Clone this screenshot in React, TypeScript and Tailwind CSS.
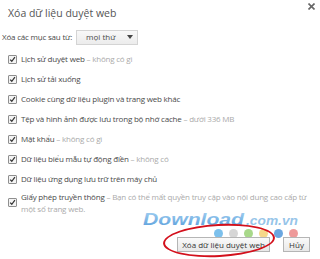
import { useState } from 'react';

const rows = [
    { label: 'Lịch sử duyệt web', note: 'không có gì' },
    { label: 'Lịch sử tải xuống', note: '' },
    { label: 'Cookie cùng dữ liệu plugin và trang web khác', note: '' },
    { label: 'Tệp và hình ảnh được lưu trong bộ nhớ cache', note: 'dưới 336 MB' },
    { label: 'Mật khẩu', note: 'không có gì' },
    { label: 'Dữ liệu biểu mẫu tự động điền', note: 'không có' },
    { label: 'Dữ liệu ứng dụng lưu trữ trên máy chủ', note: '' },
];

const CheckBox = ({ checked, onClick }: { checked: boolean; onClick: () => void }) => (
    <button
        type="button"
        onClick={onClick}
        className="w-[9px] h-[9px] shrink-0 border border-[#8f8f8f] bg-[#f4f4f4] rounded-[1px] flex items-center justify-center"
    >
        {checked && (
            <svg width="9" height="9" viewBox="0 0 9 9">
                <path d="M1.5 4.6 L3.6 6.8 L7.6 1.6" fill="none" stroke="#333" strokeWidth="1.6" />
            </svg>
        )}
    </button>
);

// Download.com.vn watermark (logo)
const Watermark = () => (
    <svg width="160" height="22" viewBox="0 0 160 22" className="absolute left-[142px] top-[208px]">
        <defs>
            <linearGradient id="wm" x1="0" y1="0" x2="0" y2="1">
                <stop offset="0" stopColor="#8cc4ee" />
                <stop offset="1" stopColor="#2f86d2" />
            </linearGradient>
        </defs>
        <text x="1" y="17" fontFamily="Liberation Sans, sans-serif" fontStyle="italic" fontWeight="bold" fontSize="16" fill="url(#wm)" fillOpacity="0.8" textLength="101" lengthAdjust="spacingAndGlyphs">
            Download
        </text>
        <text x="104" y="17" fontFamily="Liberation Sans, sans-serif" fontStyle="italic" fontWeight="bold" fontSize="12" fill="#5aa3dc" fillOpacity="0.65" textLength="52" lengthAdjust="spacingAndGlyphs">
            .com.vn
        </text>
    </svg>
);

const App = () => {
    const [checked, setChecked] = useState<boolean[]>(Array(8).fill(true));

    const toggle = (i: number) => {
        const next = [...checked];
        next[i] = !next[i];
        setChecked(next);
    };

    return (
        <div className="relative w-[320px] h-[259px] bg-white overflow-hidden text-[#4a4a4a] font-['Open_Sans',sans-serif]">
            {/* header */}
            <div className="flex justify-between items-start h-[26px]">
                <h1 className="pl-[8px] pt-[5px] text-[10.5px] leading-[16px] text-[#555]">Xóa dữ liệu duyệt web</h1>
                <svg width="7" height="7" viewBox="0 0 7 7" className="mt-[3px] mr-[5px]">
                    <path d="M0.5 0.5 L6.5 6.5 M6.5 0.5 L0.5 6.5" stroke="#666" strokeWidth="1.6" />
                </svg>
            </div>

            <div className="flex items-center h-[22px] pl-[2px] gap-[4px]">
                <span className="text-[8px] tracking-[-0.2px]">Xóa các mục sau từ:</span>
                <div className="w-[62px] h-[15px] border border-[#d4d4d4] bg-gradient-to-b from-[#f8f8f8] to-[#ececec] flex items-center justify-between pl-[9px] pr-[4px]">
                    <span className="text-[8px] leading-none">mọi thứ</span>
                    <svg width="6" height="4" viewBox="0 0 6 4">
                        <path d="M0 0 L6 0 L3 4 Z" fill="#444" />
                    </svg>
                </div>
            </div>

            <div className="flex flex-col pl-[8px] mt-[1px]">
                {rows.map((r, i) => (
                    <div key={r.label} className="flex items-center h-[20px] gap-[4px]">
                        <CheckBox checked={checked[i]} onClick={() => toggle(i)} />
                        <span className="text-[8px] tracking-[-0.2px] whitespace-nowrap">
                            {r.label}
                            {r.note && <span className="text-[#aaa]">{'  –  '}{r.note}</span>}
                        </span>
                    </div>
                ))}
                <div className="flex items-center gap-[4px] h-[24px] pt-[3px]">
                    <CheckBox checked={checked[7]} onClick={() => toggle(7)} />
                    <div className="text-[8px] tracking-[-0.2px] leading-[12px]">
                        Giấy phép truyền thông
                        <span className="text-[#aaa]"> – Bạn có thể mất quyền truy cập vào nội dung cao cấp từ một số trang web.</span>
                    </div>
                </div>
            </div>

            <Watermark />
            <div className="absolute left-[214px] top-[229px] flex gap-[6px]">
                <span className="w-[9px] h-[9px] rounded-full bg-[#7cc0ec]" />
                <span className="w-[9px] h-[9px] rounded-full bg-[#d6d6d6]" />
                <span className="w-[9px] h-[9px] rounded-full bg-[#a8d88a]" />
                <span className="w-[9px] h-[9px] rounded-full bg-[#f6d88a]" />
                <span className="w-[9px] h-[9px] rounded-full bg-[#6aa6e0]" />
                <span className="w-[9px] h-[9px] rounded-full bg-[#ee9a9a]" />
            </div>

            {/* buttons */}
            <div className="absolute left-[177px] top-[237px] flex gap-[13px]">
                <button className="w-[93px] h-[15px] border border-[#b5b5b5] bg-gradient-to-b from-[#fafafa] to-[#e8e8e8] text-[8px] leading-none text-[#333]">
                    Xóa dữ liệu duyệt web
                </button>
                <button className="w-[27px] h-[15px] border border-[#b5b5b5] bg-gradient-to-b from-[#fafafa] to-[#e8e8e8] text-[8px] leading-none text-[#333]">
                    Hủy
                </button>
            </div>

            {/* red highlight */}
            <div className="absolute left-[163px] top-[224px] w-[112px] h-[33px] rounded-[50%] border-2 border-[#d3101c] -rotate-[3deg]" />
        </div>
    );
};

export default App;
